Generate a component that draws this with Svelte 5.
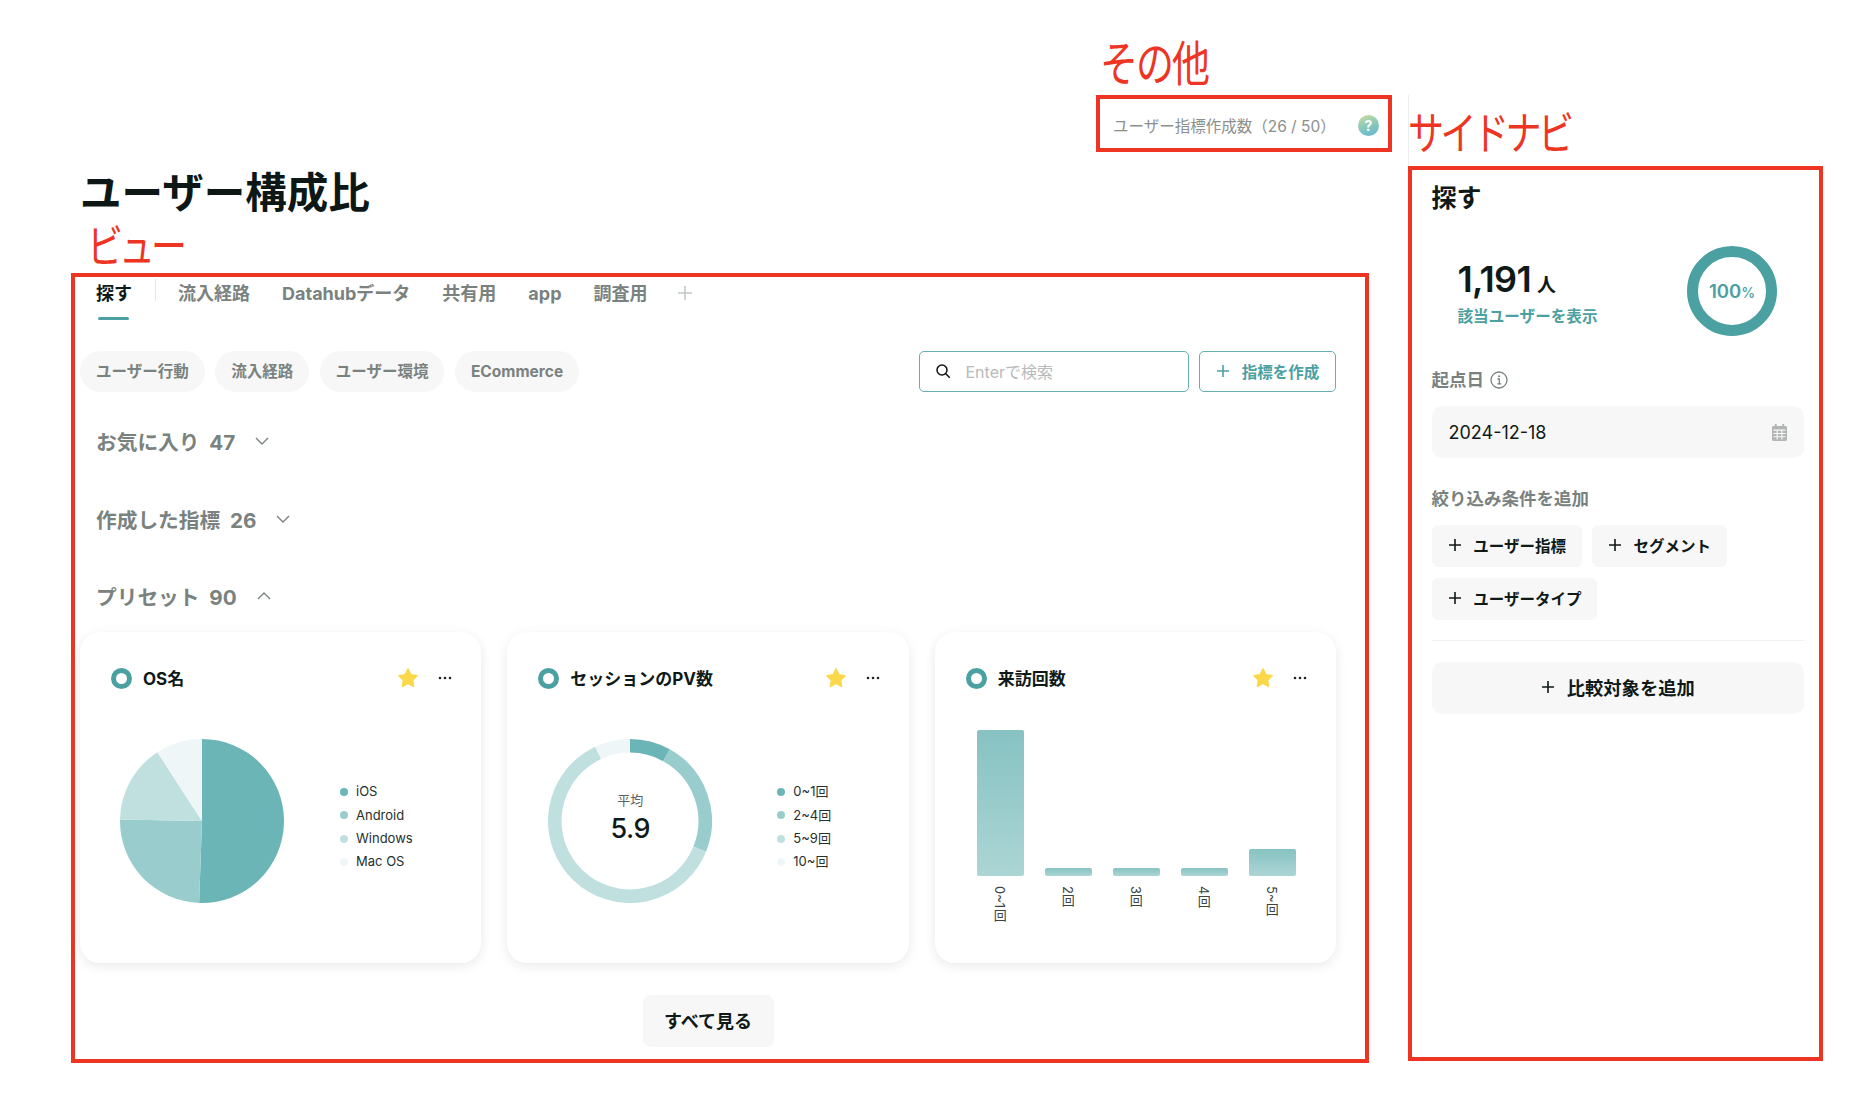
<script lang="ts">
	const filters = ['ユーザー行動', '流入経路', 'ユーザー環境', 'ECommerce'];
	const tabs = ['流入経路', 'Datahubデータ', '共有用', 'app', '調査用'];
	const colors = ['#6bb5b6', '#99cdcd', '#c0e0e0', '#eef6f7'];

	const pieAngles = [0, 182, 271, 327, 360];
	const donutAngles = [0, 29, 112, 335, 360];
	const osLegend = ['iOS', 'Android', 'Windows', 'Mac OS'];
	const visitLegend = ['0~1回', '2~4回', '5~9回', '10~回'];

	const bars = [
		{ label: '0~1回', height: 146 },
		{ label: '2回', height: 8 },
		{ label: '3回', height: 8 },
		{ label: '4回', height: 8 },
		{ label: '5~回', height: 27 }
	];

	function point(r: number, deg: number) {
		const rad = ((deg - 90) * Math.PI) / 180;
		return `${(82 + r * Math.cos(rad)).toFixed(2)} ${(82 + r * Math.sin(rad)).toFixed(2)}`;
	}

	function arc(r: number, from: number, to: number) {
		const large = to - from > 180 ? 1 : 0;
		return `M${point(r, from)} A${r} ${r} 0 ${large} 1 ${point(r, to)}`;
	}

	function wedge(from: number, to: number) {
		return `${arc(82, from, to)} L82 82 Z`;
	}
</script>

{#snippet plus()}
	<svg class="plus" viewBox="0 0 14 14" aria-hidden="true">
		<path d="M7 1v12M1 7h12" fill="none" stroke="currentColor" stroke-width="1.6" />
	</svg>
{/snippet}

{#snippet cardHead(title: string)}
	<div class="card-head">
		<span class="ring"></span>
		<span class="card-title">{title}</span>
		<svg class="star" viewBox="0 0 20 20" aria-hidden="true">
			<path
				d="M10 2.6l2.3 4.8 5.2.7-3.8 3.6.9 5.2-4.6-2.5-4.6 2.5.9-5.2-3.8-3.6 5.2-.7z"
				fill="#fbd84a"
				stroke="#fbd84a"
				stroke-width="1.4"
				stroke-linejoin="round"
			/>
		</svg>
		<svg class="dots" viewBox="0 0 14 4" aria-hidden="true">
			<circle cx="2" cy="2" r="1.3" />
			<circle cx="7" cy="2" r="1.3" />
			<circle cx="12" cy="2" r="1.3" />
		</svg>
	</div>
{/snippet}

{#snippet legend(items: string[])}
	<ul class="legend">
		{#each items as item, i}
			<li><span class="dot" style="background: {colors[i]}"></span>{item}</li>
		{/each}
	</ul>
{/snippet}

{#snippet chevron(up: boolean)}
	<svg class="chevron" viewBox="0 0 14 8" aria-hidden="true">
		<path
			d={up ? 'M1 7l6-6 6 6' : 'M1 1l6 6 6-6'}
			fill="none"
			stroke="currentColor"
			stroke-width="1.4"
		/>
	</svg>
{/snippet}

<div class="page">
	<main class="main">
		<div class="other-wrap">
			<div class="note note-other">その他</div>
			<div class="other">
				<span>ユーザー指標作成数（26 / 50）</span>
				<span class="help">?</span>
			</div>
		</div>

		<h1>ユーザー構成比</h1>
		<div class="note note-view">ビュー</div>

		<section class="view">
			<nav class="tabs">
				<span class="tab active">探す</span>
				<span class="tab-divider"></span>
				{#each tabs as tab}
					<span class="tab">{tab}</span>
				{/each}
				<svg class="tab-add" viewBox="0 0 14 14" aria-hidden="true">
					<path d="M7 0v14M0 7h14" fill="none" stroke="currentColor" stroke-width="1.6" />
				</svg>
			</nav>

			<div class="toolbar">
				{#each filters as filter}
					<span class="chip">{filter}</span>
				{/each}
				<label class="search">
					<svg viewBox="0 0 16 16" aria-hidden="true">
						<circle cx="7" cy="7" r="5" fill="none" stroke="#111" stroke-width="1.5" />
						<path d="M10.8 10.8l4 4" fill="none" stroke="#111" stroke-width="1.5" />
					</svg>
					<span>Enterで検索</span>
				</label>
				<button class="create">{@render plus()}指標を作成</button>
			</div>

			<h2 class="group first">お気に入り&nbsp; 47 {@render chevron(false)}</h2>
			<h2 class="group second">作成した指標&nbsp; 26 {@render chevron(false)}</h2>
			<h2 class="group">プリセット&nbsp; 90 {@render chevron(true)}</h2>

			<div class="cards">
				<article class="card">
					{@render cardHead('OS名')}
					<div class="chart chart-pie">
						<svg class="round" viewBox="0 0 164 164" aria-hidden="true">
							{#each colors as color, i}
								<path d={wedge(pieAngles[i], pieAngles[i + 1])} fill={color} />
							{/each}
						</svg>
						{@render legend(osLegend)}
					</div>
				</article>

				<article class="card">
					{@render cardHead('セッションのPV数')}
					<div class="chart chart-donut">
						<div class="donut">
							<svg class="round" viewBox="0 0 164 164" aria-hidden="true">
								{#each colors as color, i}
									<path
										d={arc(75.2, donutAngles[i], donutAngles[i + 1])}
										fill="none"
										stroke={color}
										stroke-width="13.6"
									/>
								{/each}
							</svg>
							<div class="donut-label">
								<small>平均</small>
								<strong>5.9</strong>
							</div>
						</div>
						{@render legend(visitLegend)}
					</div>
				</article>

				<article class="card">
					{@render cardHead('来訪回数')}
					<div class="bars">
						{#each bars as bar}
							<div class="bar-col">
								<div class="bar-area">
									<div class="bar" style="height: {bar.height}px"></div>
								</div>
								<span class="bar-label">{bar.label}</span>
							</div>
						{/each}
					</div>
				</article>
			</div>

			<button class="see-all">すべて見る</button>
		</section>
	</main>

	<aside class="aside">
		<div class="note note-side">サイドナビ</div>
		<div class="side">
			<h3>探す</h3>

			<div class="summary">
				<div>
					<div class="count">1,191<small>人</small></div>
					<div class="show-users">該当ユーザーを表示</div>
				</div>
				<div class="percent"><span>100<small>%</small></span></div>
			</div>

			<div class="field-label">
				起点日
				<svg viewBox="0 0 18 18" aria-hidden="true">
					<circle cx="9" cy="9" r="8" fill="none" stroke="currentColor" stroke-width="1.3" />
					<path d="M7.4 8h1.9v4.6M7.300 12.800h4" fill="none" stroke="currentColor" stroke-width="1.3" />
					<circle cx="9" cy="5.3" r="1" fill="currentColor" />
				</svg>
			</div>
			<div class="date">
				2024-12-18
				<svg viewBox="0 0 16 18" aria-hidden="true">
					<path
						d="M3 0h2v2h6V0h2v2h1.500A1.500 1.500 0 0 1 16 3.500V16.500A1.500 1.500 0 0 1 14.500 18H1.500A1.500 1.500 0 0 1 0 16.500V3.500A1.500 1.500 0 0 1 1.500 2H3z"
						fill="#b3b5b5"
					/>
					<path d="M1.500 6.500h13M1.500 10h13M1.500 13.500h13M5.500 6.500v10M10.500 6.500v10" stroke="#f7f7f7" stroke-width="1.200" />
				</svg>
			</div>

			<div class="field-label narrow">絞り込み条件を追加</div>
			<div class="add-filters">
				<button class="add">{@render plus()}ユーザー指標</button>
				<button class="add">{@render plus()}セグメント</button>
				<button class="add">{@render plus()}ユーザータイプ</button>
			</div>

			<hr />

			<button class="compare">{@render plus()}比較対象を追加</button>
		</div>
	</aside>
</div>

<style>
	:global(body) {
		background: #fff;
	}

	.page {
		display: flex;
		align-items: flex-start;
		gap: 16px;
		width: 1876px;
		height: 1106px;
		box-sizing: border-box;
		padding-left: 71px;
		overflow: hidden;
		font-family: Inter, 'Noto Sans CJK JP', sans-serif;
		color: #0f1a18;
	}

	.main {
		width: 1321px;
		flex: none;
	}

	/* the annotations in the reference are drawn taller than the font */
	.note {
		color: #ee3524;
		font-weight: 400;
		transform: scaleY(1.25);
		transform-origin: 0 50%;
	}

	.other-wrap {
		width: 296px;
		margin-left: auto;
		padding-top: 38px;
	}

	.note-other {
		height: 57px;
		font-size: 38px;
		line-height: 52px;
		margin-left: 4px;
		letter-spacing: -2px;
	}

	.other {
		height: 57px;
		box-sizing: border-box;
		border: 4px solid #ee3524;
		display: flex;
		align-items: center;
		justify-content: space-between;
		padding: 2px 9px 0 13px;
		font-size: 15.500px;
		color: #8b908f;
	}

	.help {
		width: 21px;
		height: 21px;
		margin-top: 1px;
		border-radius: 50%;
		background: linear-gradient(160deg, #d5dc9c, #8cccb8 45%, #62b4d2);
		color: #fff;
		font-size: 14px;
		font-weight: 700;
		display: flex;
		align-items: center;
		justify-content: center;
	}

	h1 {
		margin: 13px 0 0 9px;
		font-size: 41.500px;
		line-height: 56px;
		font-weight: 700;
		color: #0d1715;
	}

	.note-view {
		height: 52px;
		margin-left: 16px;
		font-size: 36px;
		line-height: 52px;
		letter-spacing: -4px;
	}

	.view {
		width: 1298px;
		height: 790px;
		box-sizing: border-box;
		border: 4px solid #ee3524;
		padding: 4px 29px 0 5px;
	}

	.tabs {
		display: flex;
		align-items: flex-start;
		gap: 32px;
		height: 39px;
		padding: 1px 0 0 16px;
		box-sizing: border-box;
		color: #7a8280;
	}

	.tab {
		font-size: 18px;
		line-height: 24px;
		font-weight: 700;
		white-space: nowrap;
		position: relative;
	}

	.tab.active {
		color: #0f1a18;
	}

	.tab.active::after {
		content: '';
		position: absolute;
		left: 2px;
		right: 3px;
		top: 35px;
		height: 3px;
		border-radius: 2px;
		background: #4ba0a1;
	}

	.tab-divider {
		width: 1px;
		height: 22px;
		margin: -3px -10px 0 -9px;
		background: #e4e6e6;
	}

	.tab-add {
		width: 14px;
		height: 14px;
		margin: 4px 0 0 -2px;
		color: #c4c8c7;
	}

	.toolbar {
		display: flex;
		align-items: center;
		gap: 10.500px;
		height: 41px;
		margin-top: 31px;
	}

	.chip {
		height: 41px;
		padding: 0 16px;
		border-radius: 21px;
		background: #f7f7f7;
		color: #7a8280;
		font-size: 15.500px;
		font-weight: 700;
		line-height: 42px;
		white-space: nowrap;
	}

	.search {
		display: flex;
		align-items: center;
		gap: 15px;
		width: 270px;
		height: 41px;
		box-sizing: border-box;
		margin-left: auto;
		padding: 0 0 1px 15px;
		border: 1.500px solid #67aeb0;
		border-radius: 5px;
		color: #b7bab9;
		font-size: 16px;
	}

	.search svg {
		width: 16px;
		height: 16px;
	}

	.create {
		display: flex;
		align-items: center;
		justify-content: center;
		gap: 12px;
		width: 137px;
		height: 41px;
		padding: 0 0 2px;
		background: #fff;
		border: 1.500px solid #67aeb0;
		border-radius: 5px;
		color: #4ba0a1;
		font: 700 15.500px Inter, 'Noto Sans CJK JP', sans-serif;
	}

	.plus {
		width: 14px;
		height: 14px;
		flex: none;
	}

	.group {
		display: flex;
		align-items: center;
		height: 30px;
		box-sizing: border-box;
		padding-bottom: 2px;
		margin: 47px 0 0 16px;
		color: #7a8280;
		font-size: 20.700px;
		font-weight: 700;
		white-space: pre;
	}

	.group.first {
		margin-top: 35px;
	}

	.group.second {
		margin-top: 48px;
	}

	.chevron {
		width: 14px;
		height: 8px;
		margin-left: 15px;
	}

	.cards {
		display: grid;
		grid-template-columns: repeat(3, 1fr);
		gap: 26px;
		margin-top: 20px;
	}

	.card {
		height: 331px;
		box-sizing: border-box;
		padding: 34px 31px 0;
		border-radius: 20px;
		background: #fff;
		box-shadow: 0 3px 12px rgba(0, 0, 0, 0.09);
	}

	.card-head {
		display: flex;
		align-items: center;
		height: 24px;
	}

	.ring {
		width: 21px;
		height: 21px;
		box-sizing: border-box;
		border: 5px solid #4ba0a1;
		border-radius: 50%;
		flex: none;
	}

	.card-title {
		margin: -2px 0 0 11px;
		font-size: 17px;
		font-weight: 700;
	}

	.star {
		width: 24px;
		height: 24px;
		margin-left: auto;
	}

	.dots {
		width: 14px;
		height: 4px;
		margin-left: 18px;
		margin-right: -2px;
		fill: #222;
	}

	.chart {
		display: flex;
		align-items: center;
		margin-top: 49px;
		padding-left: 9px;
	}

	.chart-pie {
		gap: 56px;
	}

	.chart-donut {
		gap: 65px;
		padding-left: 10px;
	}

	.round {
		display: block;
		width: 164px;
		height: 164px;
		flex: none;
	}

	.legend {
		margin: 12px 0 0;
		padding: 0;
		list-style: none;
		font-size: 13px;
		line-height: 23.400px;
		color: #26302e;
	}

	.legend li {
		display: flex;
		align-items: center;
		gap: 8px;
	}

	.dot {
		width: 8px;
		height: 8px;
		border-radius: 50%;
	}

	.donut {
		position: relative;
		flex: none;
	}

	.donut-label {
		position: absolute;
		inset: 0;
		display: flex;
		flex-direction: column;
		align-items: center;
		justify-content: center;
		padding-bottom: 4px;
		box-sizing: border-box;
	}

	.donut-label small {
		margin-bottom: 2px;
		font-size: 13px;
		line-height: 18px;
		color: #5b6361;
	}

	.donut-label strong {
		font-size: 27px;
		line-height: 36px;
		font-weight: 500;
		letter-spacing: -0.5px;
	}

	.bars {
		display: flex;
		gap: 21px;
		margin-top: 40px;
		padding-left: 11px;
	}

	.bar-col {
		display: flex;
		flex-direction: column;
		align-items: center;
		width: 47px;
	}

	.bar-area {
		display: flex;
		align-items: flex-end;
		width: 100%;
		height: 146px;
	}

	.bar {
		width: 100%;
		border-radius: 2px;
		background: linear-gradient(#87c2c2, #acd5d5);
	}

	.bar-label {
		margin: 10px 2px 0 0;
		writing-mode: vertical-rl;
		font-size: 13px;
		line-height: 13px;
		color: #3a4442;
	}

	.see-all {
		display: block;
		width: 131px;
		height: 52px;
		margin: 32px auto 0;
		padding: 0 0 2px;
		border: none;
		border-radius: 8px;
		background: #f7f7f7;
		color: #0f1a18;
		font: 700 18px Inter, 'Noto Sans CJK JP', sans-serif;
	}

	.aside {
		width: 415px;
		flex: none;
		margin-top: 95px;
		border-left: 1px solid #eceded;
		box-sizing: border-box;
	}

	.note-side {
		height: 71px;
		margin-left: -1px;
		font-size: 36px;
		line-height: 76px;
		letter-spacing: -3.500px;
		white-space: nowrap;
	}

	.side {
		width: 415px;
		height: 895px;
		margin-left: -1px;
		box-sizing: border-box;
		border: 4px solid #ee3524;
		padding: 13px 15px 0 19.500px;
	}

	h3 {
		margin: 0;
		font-size: 25px;
		line-height: 30px;
		font-weight: 700;
	}

	.summary {
		display: flex;
		justify-content: space-between;
		margin-top: 33px;
		padding: 0 27px 0 26px;
	}

	.count {
		margin-top: 11px;
		font-size: 36px;
		line-height: 44px;
		font-weight: 600;
		letter-spacing: -0.700px;
	}

	.count small {
		margin-left: 6px;
		font-size: 19px;
		font-weight: 700;
	}

	.show-users {
		font-size: 15.600px;
		line-height: 22px;
		font-weight: 700;
		color: #4ba0a1;
		margin-top: -2px;
	}

	.percent {
		width: 90px;
		height: 90px;
		box-sizing: border-box;
		border: 11px solid #4ba0a1;
		border-radius: 50%;
		display: flex;
		align-items: center;
		justify-content: center;
		color: #4ba0a1;
		font-size: 18.500px;
		font-weight: 600;
	}

	.percent small {
		font-size: 14px;
		font-weight: 500;
	}

	.field-label {
		display: flex;
		align-items: center;
		gap: 6px;
		margin-top: 32px;
		color: #7a8280;
		font-size: 17.500px;
		line-height: 24px;
		font-weight: 700;
	}

	.field-label svg {
		width: 18px;
		height: 18px;
	}

	.field-label.narrow {
		margin-top: 29px;
	}

	.date {
		display: flex;
		align-items: center;
		justify-content: space-between;
		height: 52px;
		margin-top: 14px;
		padding: 0 17px;
		border-radius: 10px;
		background: #f7f7f7;
		font-size: 18px;
	}

	.date svg {
		width: 15px;
		height: 17px;
	}

	.add-filters {
		display: flex;
		flex-wrap: wrap;
		gap: 11px 10px;
		margin-top: 14px;
	}

	.add {
		display: flex;
		align-items: center;
		gap: 11.700px;
		height: 42px;
		padding: 0 16px 2px;
		border: none;
		border-radius: 6px;
		background: #f7f7f7;
		color: #0f1a18;
		font: 700 15.500px Inter, 'Noto Sans CJK JP', sans-serif;
		white-space: nowrap;
	}

	hr {
		height: 1px;
		margin: 20px 0 21px;
		border: none;
		background: #f0f1f1;
	}

	.compare {
		display: flex;
		align-items: center;
		justify-content: center;
		gap: 12px;
		width: 100%;
		height: 52px;
		padding: 0 0 2px;
		border: none;
		border-radius: 10px;
		background: #f7f7f7;
		color: #0f1a18;
		font: 700 18.300px Inter, 'Noto Sans CJK JP', sans-serif;
	}
</style>
